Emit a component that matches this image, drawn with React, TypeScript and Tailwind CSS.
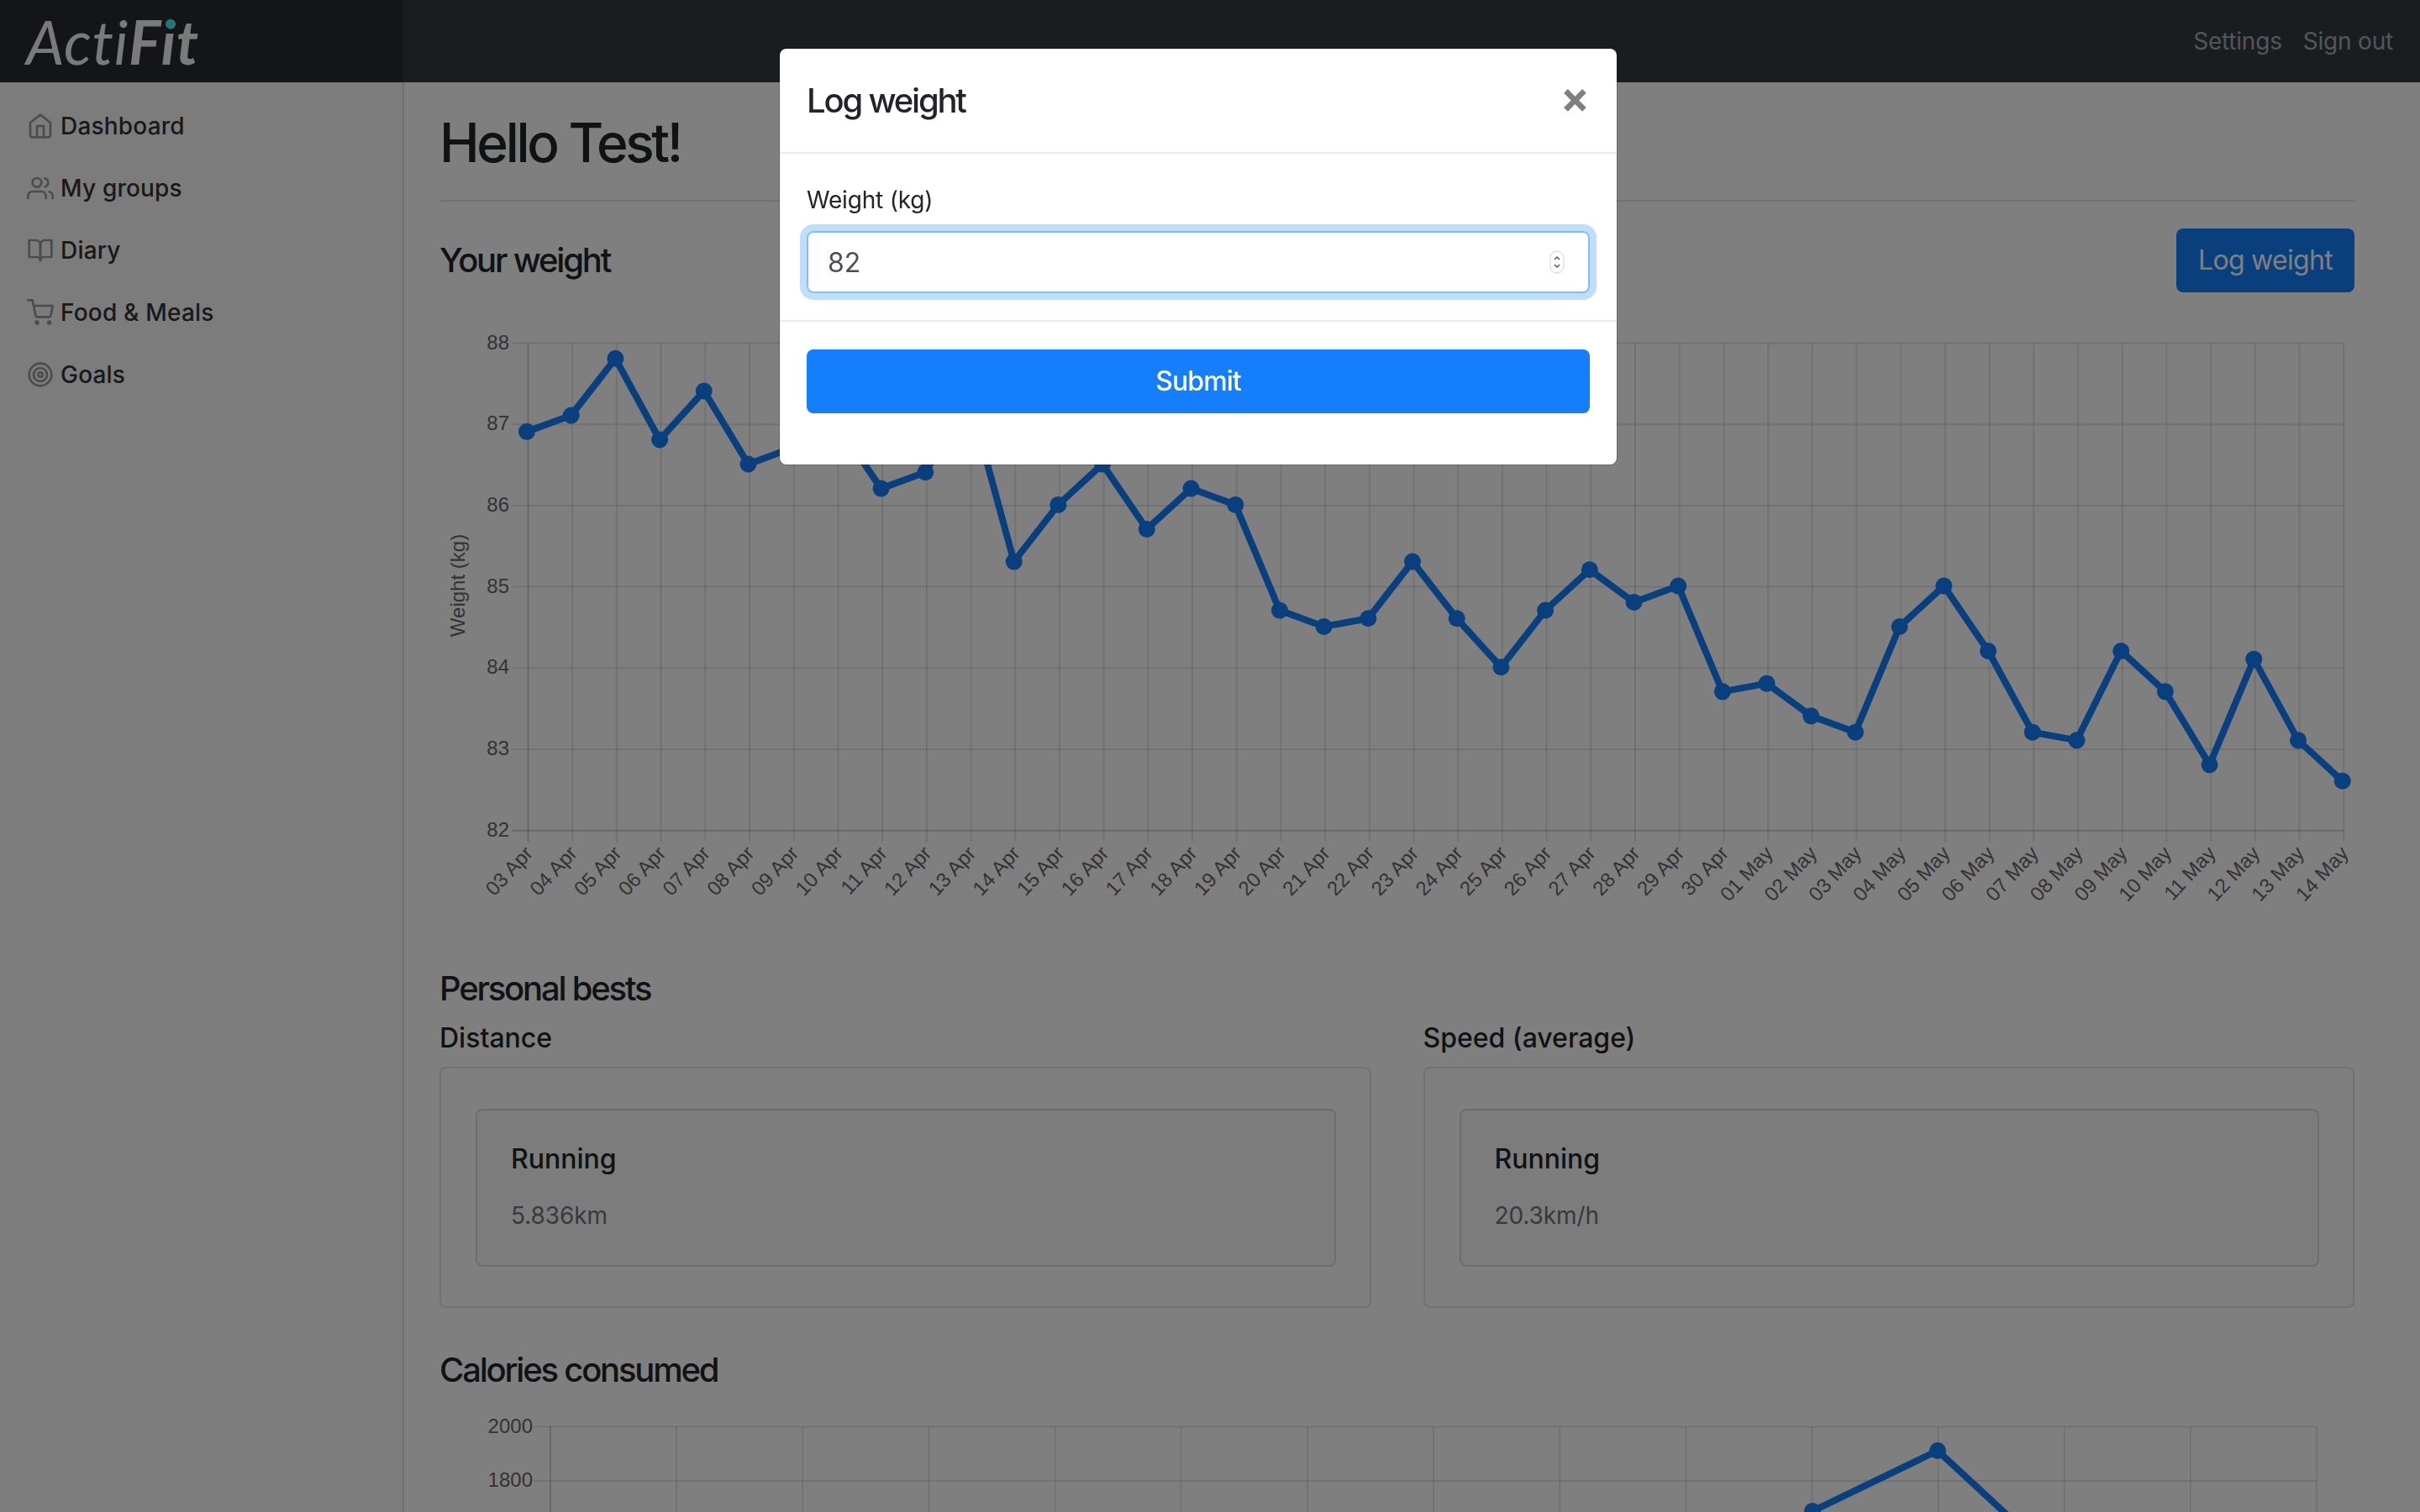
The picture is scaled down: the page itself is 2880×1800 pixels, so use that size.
const weights = [86.9, 87.1, 87.8, 86.8, 87.4, 86.5, 86.7, 87.0, 86.2, 86.4, 87.3, 85.3, 86, 86.5, 85.7, 86.2, 86, 84.7, 84.5, 84.6, 85.3, 84.6, 84, 84.7, 85.2, 84.8, 85, 83.7, 83.8, 83.4, 83.2, 84.5, 85, 84.2, 83.2, 83.1, 84.2, 83.7, 82.8, 84.1, 83.1, 82.6]

const days = [
  ...Array.from({ length: 28 }, (_, i) => `${String(i + 3).padStart(2, '0')} Apr`),
  ...Array.from({ length: 14 }, (_, i) => `${String(i + 1).padStart(2, '0')} May`),
]

const chartFont = { fontFamily: '"Liberation Sans", Arial, sans-serif', fontSize: 24 }

function WeightChart() {
  const left = 628.5
  const step = 52.7
  const yOf = (v: number) => 408.5 + (88 - v) * 96.7
  const pts = weights.map((w, i) => [left - 1.5 + i * step, yOf(w) - 1] as const)

  return (
    <svg viewBox="523 388 2279 720" className="mt-10 block h-[720px] w-[2279px]">
      {[88, 87, 86, 85, 84, 83, 82].map(v => (
        <g key={v}>
          <line x1={609} x2={2789} y1={yOf(v)} y2={yOf(v)} stroke="#000" strokeOpacity={v === 82 ? 0.18 : 0.1} strokeWidth={2} />
          <text x={606} y={yOf(v) + 7} textAnchor="end" fill="#666" style={chartFont}>{v}</text>
        </g>
      ))}
      {days.map((d, i) => {
        const x = left + i * step
        return (
          <g key={d}>
            <line x1={x} x2={x} y1={408} y2={1002} stroke="#000" strokeOpacity={i === 0 ? 0.18 : 0.1} strokeWidth={2} />
            <text
              textAnchor="end"
              fill="#666"
              transform={`translate(${x + 7} 1017) rotate(-47)`}
              style={chartFont}
            >
              {d}
            </text>
          </g>
        )
      })}
      <text transform="translate(553 697) rotate(-90)" textAnchor="middle" fill="#666" style={chartFont}>Weight (kg)</text>
      <polyline points={pts.map(p => p.join(',')).join(' ')} fill="none" stroke="#147efb" strokeWidth={8} strokeLinejoin="miter" />
      {pts.map(([x, y], i) => (
        <circle key={i} cx={x} cy={y} r={10} fill="#147efb" />
      ))}
    </svg>
  )
}

function CaloriesChart() {
  const pts = [[2006, 1900], [2157, 1799], [2306, 1727], [2456, 1866]]
  return (
    <svg viewBox="523 1651 2279 149" className="block h-[149px] w-[2279px]">
      {[[2000, 1698.5], [1800, 1763]].map(([v, y]) => (
        <g key={v}>
          <line x1={636} x2={2757} y1={y} y2={y} stroke="#000" strokeOpacity={0.1} strokeWidth={2} />
          <text x={634} y={y + 7} textAnchor="end" fill="#666" style={chartFont}>{v}</text>
        </g>
      ))}
      {Array.from({ length: 15 }, (_, i) => (
        <line key={i} x1={655 + i * 150.15} x2={655 + i * 150.15} y1={1698} y2={1800} stroke="#000" strokeOpacity={i === 0 ? 0.18 : 0.1} strokeWidth={2} />
      ))}
      <polyline points={pts.map(p => p.join(',')).join(' ')} fill="none" stroke="#147efb" strokeWidth={8} />
      {pts.map(([x, y]) => (
        <circle key={x} cx={x} cy={y} r={10} fill="#147efb" />
      ))}
    </svg>
  )
}

function NavIcon({ children }: { children: React.ReactNode }) {
  return (
    <svg viewBox="0 0 24 24" fill="none" stroke="currentColor" strokeWidth="2" strokeLinecap="round" strokeLinejoin="round" className="h-8 w-8 shrink-0 text-[#999]">
      {children}
    </svg>
  )
}

const navItems = [
  {
    label: 'Dashboard',
    icon: (
      <>
        <path d="M3 9l9-7 9 7v11a2 2 0 0 1-2 2H5a2 2 0 0 1-2-2z" />
        <polyline points="9 22 9 12 15 12 15 22" />
      </>
    ),
  },
  {
    label: 'My groups',
    icon: (
      <>
        <path d="M17 21v-2a4 4 0 0 0-4-4H5a4 4 0 0 0-4 4v2" />
        <circle cx="9" cy="7" r="4" />
        <path d="M23 21v-2a4 4 0 0 0-3-3.87" />
        <path d="M16 3.13a4 4 0 0 1 0 7.75" />
      </>
    ),
  },
  {
    label: 'Diary',
    icon: (
      <>
        <path d="M2 3h6a4 4 0 0 1 4 4v14a3 3 0 0 0-3-3H2z" />
        <path d="M22 3h-6a4 4 0 0 0-4 4v14a3 3 0 0 1 3-3h7z" />
      </>
    ),
  },
  {
    label: 'Food & Meals',
    icon: (
      <>
        <circle cx="9" cy="21" r="1" />
        <circle cx="20" cy="21" r="1" />
        <path d="M1 1h4l2.68 13.39a2 2 0 0 0 2 1.61h9.72a2 2 0 0 0 2-1.61L23 6H6" />
      </>
    ),
  },
  {
    label: 'Goals',
    icon: (
      <>
        <circle cx="12" cy="12" r="10" />
        <circle cx="12" cy="12" r="6" />
        <circle cx="12" cy="12" r="2" />
      </>
    ),
  },
]

function BestCard({ title, activity, value }: { title: string; activity: string; value: string }) {
  return (
    <div>
      <h5 className="mt-[16px] text-[32px] leading-[38px] font-medium text-[#212529]">{title}</h5>
      <div className="mt-[15px] h-[287px] rounded-lg border-2 border-[#dee2e6] pt-[48px] pr-[40px] pl-[41px]">
        <div className="h-[188px] rounded-lg border-2 border-[#d8dadc] bg-[#f8f9fa] px-10 pt-[39px]">
          <div className="text-[32px] leading-[38px] font-medium text-[#212529]">{activity}</div>
          <div className="mt-[27px] text-[28px] leading-[42px] tracking-[-0.1px] text-[#6c757d]">{value}</div>
        </div>
      </div>
    </div>
  )
}

export default function App() {
  return (
    <div className="relative h-screen overflow-hidden bg-white font-['Inter','Liberation_Sans',sans-serif] text-[#212529]">
      <header className="flex h-[98px] items-center bg-[#343a40]">
        <div className="flex h-full w-[480px] shrink-0 items-center bg-[#272b30] pl-[31px]">
          <a className="relative font-['Lato',sans-serif] text-[72px] leading-none tracking-[0.7px] text-[#f4f4f4] italic">
            <span className="font-normal">Acti</span>
            <span className="font-bold">Fit</span>
            <span className="absolute top-[10px] left-[166px] h-[11px] w-[11px] rounded-full bg-[#33f0ff]" />
          </a>
        </div>
        <nav className="ml-auto flex gap-[25px] pr-[32px] text-[28px] tracking-[-0.2px] text-[#a9abad]">
          <a>Settings</a>
          <a>Sign out</a>
        </nav>
      </header>

      <div className="flex">
        <aside className="h-[1702px] w-[481px] shrink-0 border-r-2 border-[#dee2e6] bg-[#f8f9fa] pt-[15px]">
          {navItems.map(item => (
            <a key={item.label} className="flex h-[74px] items-center gap-[8px] pl-[32px] text-[28px] font-medium tracking-[0.2px] text-[#333]">
              <NavIcon>{item.icon}</NavIcon>
              {item.label}
            </a>
          ))}
        </aside>

        <main className="w-[2321px] pl-[42px]">
          <div className="w-[2279px]">
            <h1 className="mt-[33px] border-b-2 border-[#dee2e6] pb-[30px] text-[64px] leading-[77px] font-medium tracking-[-3.3px]">Hello Test!</h1>

            <div className="mt-[32px] flex items-center justify-between">
              <h2 className="text-[40px] leading-[48px] font-medium tracking-[-2.2px]">Your weight</h2>
              <button className="h-[76px] w-[212px] rounded-lg bg-[#147efb] text-[32px] tracking-[-0.7px] text-white">Log weight</button>
            </div>

            <WeightChart />

            <h2 className="mt-[45px] text-[40px] leading-[48px] font-medium tracking-[-2.2px]">Personal bests</h2>
            <div className="grid grid-cols-2 gap-x-[62px]">
              <BestCard title="Distance" activity="Running" value="5.836km" />
              <BestCard title="Speed (average)" activity="Running" value="20.3km/h" />
            </div>

            <h2 className="mt-[54px] text-[40px] leading-[40px] font-medium tracking-[-2.2px]">Calories consumed</h2>
            <CaloriesChart />
          </div>
        </main>
      </div>

      {/* modal backdrop */}
      <div className="fixed inset-0 bg-black/50" />
      <div className="fixed inset-0 flex items-start justify-center pt-[58px] pr-[28px]">
        <div className="h-[495px] w-[996px] rounded-lg bg-white shadow-[0_0_0_1px_rgba(0,0,0,0.2)]">
          <div className="flex h-[125px] items-center justify-between border-b-2 border-[#e9ecef] px-8">
            <h4 className="text-[40px] leading-[48px] font-medium tracking-[-2.2px] text-[#212529]">Log weight</h4>
            <button className="pb-[8px] text-[52px] leading-none font-bold text-black/50">×</button>
          </div>
          <div className="h-[200px] border-b-2 border-[#e9ecef] px-8 pt-[34px]">
            <label className="block text-[28px] leading-[42px] tracking-[-0.2px] text-[#212529]">Weight (kg)</label>
            <div className="relative mt-[16px]">
              <input
                readOnly
                value="82"
                className="h-[74px] w-full rounded-lg border-2 border-[#80bdff] px-[23px] text-[32px] text-[#495057] shadow-[0_0_0_8px_rgba(0,123,255,0.25)] outline-none"
              />
              <svg viewBox="0 0 18 28" className="absolute top-[23px] right-[30px] h-[28px] w-[18px]" fill="none">
                <rect x="1" y="1" width="16" height="26" rx="8" fill="#fff" stroke="#d4d4d4" />
                <path d="M6 11l3-3 3 3M6 17l3 3 3-3" stroke="#555" strokeWidth="1.5" />
              </svg>
            </div>
          </div>
          <div className="px-8 pt-[33px]">
            <button className="h-[76px] w-full rounded-lg bg-[#147efb] text-[32px] font-medium tracking-[-0.9px] text-white">Submit</button>
          </div>
        </div>
      </div>
    </div>
  )
}
